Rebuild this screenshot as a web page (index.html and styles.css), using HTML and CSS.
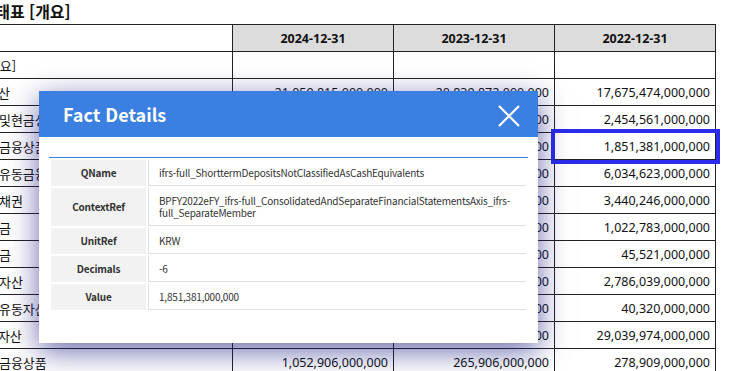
FILE: index.html
```html
<!DOCTYPE html>
<html lang="ko">
<head>
    <meta charset="UTF-8">
    <meta name="viewport" content="width=device-width, initial-scale=1.0">
    <title>재무상태표</title>
    <link rel="stylesheet" href="styles.css">
</head>
<body>
    <div class="page">
        <h2 class="sheetTitle">재무상태표 [개요]</h2>

        <table class="sheet">
            <colgroup>
                <col class="labelCol">
                <col class="valueCol">
                <col class="valueCol">
                <col class="valueCol">
            </colgroup>
            <tr>
                <th class="labelHead"></th>
                <th>2024-12-31</th>
                <th>2023-12-31</th>
                <th>2022-12-31</th>
            </tr>
            <tr>
                <td class="label lv0">재무상태표 [개요]</td>
                <td></td>
                <td></td>
                <td></td>
            </tr>
            <tr>
                <td class="label lv1">유동자산</td>
                <td>21,059,815,000,000</td>
                <td>20,839,872,000,000</td>
                <td>17,675,474,000,000</td>
            </tr>
            <tr>
                <td class="label lv2">현금및현금성자산</td>
                <td>3,284,156,000,000</td>
                <td>2,817,640,000,000</td>
                <td>2,454,561,000,000</td>
            </tr>
            <tr>
                <td class="label lv2">단기금융상품</td>
                <td>2,106,402,000,000</td>
                <td>1,963,218,000,000</td>
                <td class="picked">1,851,381,000,000</td>
            </tr>
            <tr>
                <td class="label lv2">기타유동금융자산</td>
                <td>6,812,530,000,000</td>
                <td>6,401,117,000,000</td>
                <td>6,034,623,000,000</td>
            </tr>
            <tr>
                <td class="label lv2">매출채권</td>
                <td>3,901,744,000,000</td>
                <td>3,655,820,000,000</td>
                <td>3,440,246,000,000</td>
            </tr>
            <tr>
                <td class="label lv2">미수금</td>
                <td>1,204,318,000,000</td>
                <td>1,117,490,000,000</td>
                <td>1,022,783,000,000</td>
            </tr>
            <tr>
                <td class="label lv2">선급금</td>
                <td>52,806,000,000</td>
                <td>48,930,000,000</td>
                <td>45,521,000,000</td>
            </tr>
            <tr>
                <td class="label lv2">재고자산</td>
                <td>3,102,475,000,000</td>
                <td>2,954,810,000,000</td>
                <td>2,786,039,000,000</td>
            </tr>
            <tr>
                <td class="label lv2">기타유동자산</td>
                <td>47,212,000,000</td>
                <td>43,880,000,000</td>
                <td>40,320,000,000</td>
            </tr>
            <tr>
                <td class="label lv1">비유동자산</td>
                <td>31,520,683,000,000</td>
                <td>30,214,090,000,000</td>
                <td>29,039,974,000,000</td>
            </tr>
            <tr>
                <td class="label lv2">장기금융상품</td>
                <td>1,052,906,000,000</td>
                <td>265,906,000,000</td>
                <td>278,909,000,000</td>
            </tr>
        </table>
    </div>

    <div class="factModal">
        <div class="factHeader">
            <span class="factTitle">Fact Details</span>
            <svg class="closeIcon" width="22" height="22" viewBox="0 0 22 22">
                <path d="M1 1 L21 21 M21 1 L1 21" stroke="#fff" stroke-width="2.2" fill="none"/>
            </svg>
        </div>
        <div class="factBody">
            <div class="factRule"></div>
            <table class="factTable">
                <tr>
                    <th>QName</th>
                    <td>ifrs-full_ShorttermDepositsNotClassifiedAsCashEquivalents</td>
                </tr>
                <tr>
                    <th>ContextRef</th>
                    <td>BPFY2022eFY_ifrs-full_ConsolidatedAndSeparateFinancialStatementsAxis_ifrs-full_SeparateMember</td>
                </tr>
                <tr>
                    <th>UnitRef</th>
                    <td>KRW</td>
                </tr>
                <tr>
                    <th>Decimals</th>
                    <td>-6</td>
                </tr>
                <tr>
                    <th>Value</th>
                    <td>1,851,381,000,000</td>
                </tr>
            </table>
        </div>
    </div>
</body>
</html>
```

FILE: styles.css
```css
body {
    margin: 0;
    overflow: hidden;
    background-color: #fff;
    font-family: 'Noto Sans', 'Noto Sans CJK KR', sans-serif;
    color: #111;
}

.page {
    margin-left: -88px;
}

.sheetTitle {
    margin: 0;
    padding-left: 39px;
    height: 24px;
    font-size: 16px;
    line-height: 23px;
    font-weight: bold;
    font-family: 'Noto Sans CJK KR', sans-serif;
}

.sheet {
    border-collapse: collapse;
    table-layout: fixed;
    width: 804px;
    font-size: 12.5px;
}

.labelCol {
    width: 320px;
}

.valueCol {
    width: 161px;
}

.sheet th,
.sheet td {
    border: 1px solid #222;
    height: 26px;
    padding: 0 5px 0 0;
    white-space: nowrap;
    overflow: hidden;
    text-align: right;
}

.sheet th {
    background-color: #dcdcdc;
    text-align: center;
    font-weight: bold;
    padding: 0;
}

.sheet .labelHead {
    background-color: #fff;
}

.sheet .label {
    text-align: left;
    font-family: 'Noto Sans CJK KR', sans-serif;
    font-size: 13px;
    padding-right: 0;
}

.sheet .lv0 { padding-left: 7px; }
.sheet .lv1 { padding-left: 49px; }
.sheet .lv2 { padding-left: 62px; }

.sheet .picked {
    overflow: visible;
    outline: 4px solid #2b2bec;
    outline-offset: 0;
}

.factModal {
    position: absolute;
    left: 39px;
    top: 91px;
    width: 499px;
    height: 252px;
    background-color: #fff;
    box-shadow: 0 8px 28px rgba(25, 25, 130, 0.65);
}

.factHeader {
    height: 46px;
    background-color: #3b80e0;
    display: flex;
    align-items: center;
    justify-content: space-between;
    padding: 0 18px 0 24px;
}

.factTitle {
    color: #fff;
    font-family: 'Noto Sans CJK KR', sans-serif;
    font-size: 18px;
    font-weight: bold;
}

.closeIcon {
    margin-top: 4px;
}

.factBody {
    padding: 0 10px;
}

.factRule {
    height: 20px;
    border-bottom: 1px solid #3b80e0;
}

.factTable {
    width: 100%;
    border-collapse: separate;
    border-spacing: 2px;
    font-family: 'Noto Sans CJK KR', sans-serif;
    font-size: 10px;
    letter-spacing: -0.2px;
    line-height: 12px;
    color: #333;
}

.factTable th {
    width: 87px;
    background-color: #f2f2f2;
    font-weight: bold;
    text-align: center;
    padding: 7px 4px;
}

.factTable td {
    padding: 7px 10px 6px;
    border-left: 1px solid #e0e0e0;
    border-bottom: 1px solid #e0e0e0;
}
```
